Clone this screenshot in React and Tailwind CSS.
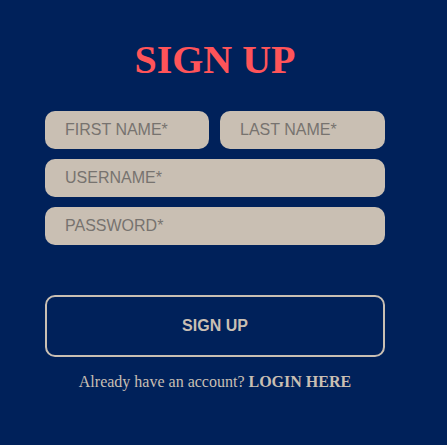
import React from 'react'

const inputCls =
  "h-[38px] rounded-[10px] bg-[#c9bfb3] px-5 text-[16px] text-[#6f6f6f] placeholder-[#77736f] outline-none font-['Liberation_Sans',Arial,sans-serif]"

export default function App() {
  return (
    <div className="w-[447px] h-[445px] bg-[#00215a] overflow-hidden">
      <div className="ml-[45px] w-[340px] pt-[38px] flex flex-col">
        {/* Title */}
        <h1 className="text-center text-[40px] leading-[44px] font-bold text-[#ff5459] font-['Liberation_Serif','Times_New_Roman',serif]">
          SIGN UP
        </h1>

        {/* Fields */}
        <div className="mt-[29px] flex flex-col gap-[10px]">
          <div className="flex gap-[11px]">
            <input placeholder="FIRST NAME*" className={inputCls + ' w-[164px]'} />
            <input placeholder="LAST NAME*" className={inputCls + ' w-[165px]'} />
          </div>
          <input placeholder="USERNAME*" className={inputCls + ' w-full'} />
          <input placeholder="PASSWORD*" className={inputCls + ' w-full'} />
        </div>

        {/* Submit */}
        <button className="mt-[50px] h-[62px] w-full rounded-[10px] border-2 border-[#c9bfb3] text-[16px] font-bold text-[#c9bfb3] font-['Liberation_Sans',Arial,sans-serif]">
          SIGN UP
        </button>

        <p className="mt-[14px] text-center text-[16px] leading-[22px] text-[#c9bfb3] font-['Liberation_Serif','Times_New_Roman',serif]">
          Already have an account? <span className="font-bold">LOGIN HERE</span>
        </p>
      </div>
    </div>
  )
}
